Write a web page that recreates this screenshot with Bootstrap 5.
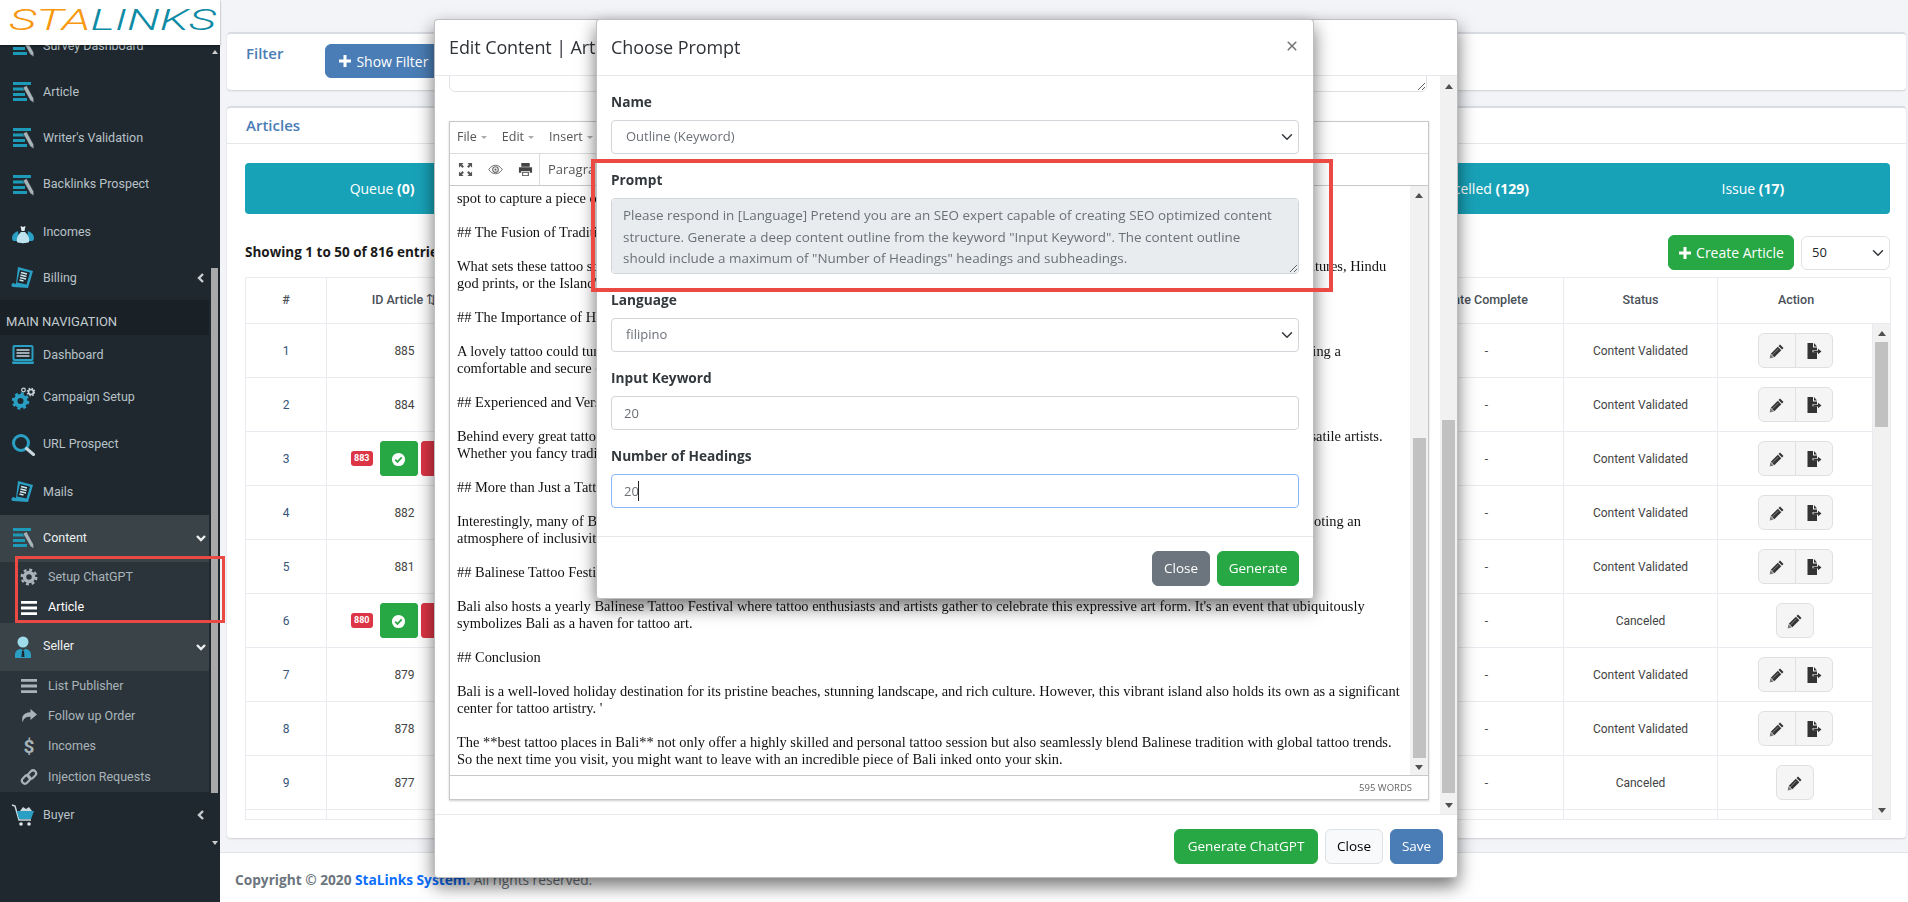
<!DOCTYPE html>
<html lang="en">
<head>
<meta charset="UTF-8">
<title>StaLinks - Articles</title>
<link href="https://cdn.jsdelivr.net/npm/bootstrap@5.3.0/dist/css/bootstrap.min.css" rel="stylesheet">
<style>
    html, body { height: 902px; overflow: hidden; }
    body { font-family: "Open Sans", "Liberation Sans", sans-serif; font-size: 13px; background: #f2f4f8; color: #333; }

    /* sidebar */
    .side-wrap { width: 220px; height: 902px; background: #1f282e; flex-shrink: 0; }
    .logo-box { height: 45px; background: #fff; box-shadow: 0 1px 2px rgba(0,0,0,.4); position: relative; z-index: 2; }
    .side-scroll { height: 803px; overflow: hidden; }
    .side-menu { width: 209px; margin-top: -22px; }
    .side-item { height: 46px; padding-left: 11px; color: #b8c2c8; font-family: Roboto, sans-serif; font-size: 12.5px; text-decoration: none; }
    .side-item .ico { width: 24px; height: 24px; margin-right: 8px; flex-shrink: 0; }
    .side-item .chev { margin-left: auto; margin-right: 3px; width: 10px; height: 10px; }
    .sh-47 { height: 47.5px; } .sh-48 { height: 48px; } .sh-43 { height: 43px; } .sh-41 { height: 41px; }
    .sh-44 { height: 44px; } .sh-50 { height: 50px; } .sh-45 { height: 45px; }
    .side-head { height: 35px; padding: 13px 0 0 6px; background: #192126; color: #c4ccd0; font-family: Roboto, sans-serif; font-size: 13px; line-height: 18px; }
    .side-open { background: #3a4347; color: #eef1f2; }
    .side-sub { background: #2c343b; }
    .sub-item { height: 30.4px; padding-left: 20px; color: #a9b4ba; font-family: Roboto, sans-serif; font-size: 12.5px; text-decoration: none; }
    .sub-item svg { width: 18px; height: 18px; margin-right: 10px; }
    .sub-item .dollar { width: 18px; margin-right: 10px; text-align: center; font-size: 19px; font-weight: 700; line-height: 1; }
    .sub-item.on { color: #fff; }
    .fake-bar { display: flex; flex-direction: column; align-items: center; }
    .bar-up { width: 0; height: 0; border: 4px solid transparent; border-top: 0; border-bottom: 5px solid #505050; }
    .bar-down { width: 0; height: 0; border: 4px solid transparent; border-bottom: 0; border-top: 5px solid #505050; margin-top: auto; }
    .bar-thumb { background: #c1c1c1; }
    .side-bar { width: 7px; margin-left: 2px; height: 803px; }
    .side-bar .bar-up { border-bottom-color: #ccc; border-width: 3px; border-top: 0; border-bottom-width: 4px; margin-top: 5px; }
    .side-bar .bar-down { border-top-color: #ccc; border-width: 3px; border-bottom: 0; border-top-width: 4px; margin-bottom: 3px; }
    .side-bar .bar-thumb { width: 7px; height: 525px; margin-top: 214px; background: #a9a9a9; }

    /* main */
    .main-col { min-width: 0; flex-grow: 1; }
    .main-inner { padding: 32px 2px 0 7px; height: 852px; }
    .box { background: #fff; border-radius: 4px; border-top: 2px solid #d9dce2; box-shadow: 0 1px 2px rgba(0,0,0,.15); }
    .box-filter { height: 58px; padding: 8px 19px; margin-bottom: 16px; }
    .box-title { font-size: 15px; font-weight: 600; color: #4a7db5; }
    .btn-steel { background: #4a7db5; border-color: #4a7db5; color: #fff; font-size: 14px; }
    .btn-steel:hover { background: #4a7db5; color: #fff; }
    .btn-filter { height: 34px; margin-left: 42px; padding: 0 12px; margin-top: 2px; }
    .box-list { height: 732px; }
    .box-list-head { height: 36px; padding: 6px 19px; border-bottom: 1px solid #e4e6ea; }
    .box-list-body { padding: 19px 16px 0 18px; }
    .tab-strip { height: 51px; background: #18a2b8; border-radius: 4px; }
    .tab-cell { color: #fff; font-size: 14px; }
    .list-tools { height: 35px; margin: 21px 0 7px; }
    .show-text { font-size: 13.5px; font-weight: 700; color: #1a1a1a; }
    .btn-create { height: 35px; width: 126px; padding: 0; font-size: 14px; background: #28a745; border-color: #28a745; color: #fff; }
    .sel-len { width: 89px; height: 34px; margin-left: 7px; padding: 0 0 0 10px; font-size: 13px; background-position: right 5px center; background-size: 12px; }
    .art-table { width: 1645px; table-layout: fixed; margin: 0; --bs-border-color: #e9ebf0; font-family: Roboto, sans-serif; font-size: 12px; }
    .art-table th { height: 46px; padding: 0; text-align: center; vertical-align: middle; font-weight: 500; color: #4a5058; font-size: 12.5px; }
    .art-table td { height: 54px; padding: 0; text-align: center; vertical-align: middle; color: #444; }
    .art-table tr.cut td { height: 10px; line-height: 0; }
    .art-table td.num { color: #34557a; }
    .art-table td.bar-cell { background: #f1f1f1; padding: 0; vertical-align: top; }
    .table-bar { height: 495px; }
    .table-bar .bar-up { margin-top: 7px; }
    .table-bar .bar-thumb { width: 13px; height: 85px; margin-top: 6px; }
    .table-bar .bar-down { margin-bottom: 6px; }
    .act-btn { width: 38px; height: 35px; padding: 0; background: #f5f5f5; border: 1px solid #e0e0e0; }
    .act-btn svg { width: 16px; height: 16px; }
    .id-pill { font-size: 9px; font-weight: 700; padding: 1px 3px; background: #dc3545; color: #fff; border-radius: 3px; margin-right: 7px; }
    .go-btn { width: 38px; height: 35px; padding: 0; background: #28a745; border-color: #28a745; border-radius: 3px; }
    .stop-btn { width: 38px; height: 35px; padding: 0; margin-left: 3px; background: #dc3545; border-color: #dc3545; border-radius: 3px; }
    .foot-line { height: 50px; background: #fff; border-top: 1px solid #dfe2e6; padding: 17px 0 0 15px; font-size: 13.7px; color: #6c757d; }
    .foot-line b { font-weight: 700; }
    .foot-line a { color: #0d6efd; font-weight: 700; text-decoration: none; }

    /* modals */
    .dlg { position: fixed; top: 19px; box-shadow: 0 8px 18px rgba(0,0,0,.55); border-radius: 4px; }
    .dlg .modal-content { background: #fff; border: 1px solid rgba(0,0,0,.25); border-radius: 4px; overflow: hidden; }
    .dlg .modal-header { height: 56px; padding: 0 14px; flex: none; border-bottom: 1px solid #e6e8eb; display: flex; align-items: center; justify-content: space-between; }
    .dlg .modal-title { font-size: 18px; font-weight: 400; color: #2f3338; margin: 0; letter-spacing: -.1px; }
    .dlg .modal-footer { flex: none; padding: 0 14px; gap: 7px; justify-content: flex-end; border-top: 1px solid #e6e8eb; display: flex; align-items: center; }
    .dlg .modal-footer > .btn { margin: 0; height: 35px; padding: 0; font-size: 13.5px; }
    .dlg .btn-success { background: #28a745; border-color: #28a745; }
    .dlg .btn-close { width: 12px; height: 12px; padding: 0; margin-right: 1px; margin-top: -4px; background-size: 12px; opacity: .55; }
    .btn-gen { width: 144px; } .btn-cl { width: 58px; } .btn-sv { width: 53px; } .btn-run { width: 82px; }
    .dlg-edit { left: 434px; width: 1024px; height: 859px; z-index: 10; }
    .dlg-edit .modal-footer { height: 64px; }
    .edit-body { flex: none; height: 738px; padding: 0; overflow: hidden; }
    .edit-left { width: 1006px; padding-left: 14px; overflow: hidden; }
    .top-area { width: 978px; height: 40px; margin-top: -24px; margin-bottom: 29px; display: block; }
    .edit-bar { width: 17px; background: #f1f1f1; height: 738px; }
    .edit-bar .bar-up { margin-top: 8px; }
    .edit-bar .bar-thumb { width: 13px; height: 373px; margin-top: 331px; }
    .edit-bar .bar-down { margin-bottom: 6px; }
    .rte { width: 980px; height: 679px; border: 1px solid #c8c8c8; box-shadow: 0 1px 2px rgba(0,0,0,.2); }
    .rte-menu { height: 32px; padding-left: 7px; border-bottom: 1px solid #dcdcdc; gap: 15px; color: #555; font-size: 12.5px; }
    .rte-menu i { display: inline-block; width: 0; height: 0; margin-left: 4px; vertical-align: middle; border: 3px solid transparent; border-bottom: 0; border-top: 3px solid #aaa; }
    .rte-tools { height: 32px; border-bottom: 1px solid #c8c8c8; color: #555; font-size: 13px; }
    .rte-tools .tool-set { width: 90px; height: 31px; padding-left: 8px; gap: 15px; border-right: 1px solid #dcdcdc; }
    .rte-tools svg { width: 15px; height: 15px; }
    .rte-tools span { padding-left: 8px; }
    .rte-main { height: 589px; overflow: hidden; }
    .rte-text { width: 960px; padding: 4px 0 0 7px; font-family: "Liberation Serif", serif; font-size: 14.43px; line-height: 17px; color: #111; white-space: nowrap; overflow: hidden; }
    .rte-text p { margin: 0 0 17px; }
    .rte-bar { width: 18px; background: #f1f1f1; height: 589px; }
    .rte-bar .bar-up { margin-top: 7px; }
    .rte-bar .bar-thumb { width: 13px; height: 320px; margin-top: 240px; }
    .rte-bar .bar-down { margin-bottom: 5px; }
    .rte-status { height: 26px; border-top: 1px solid #c8c8c8; padding-right: 16px; font-size: 9.5px; color: #666; }
    .dlg-prompt { left: 596px; width: 718px; height: 580px; z-index: 20; }
    .dlg-prompt .modal-footer { height: 63px; }
    .prompt-body { flex: none; height: 460px; padding: 17px 14px 0 14px; }
    .field-label { display: block; height: 17px; line-height: 17px; margin-bottom: 10px; font-size: 13.7px; font-weight: 700; color: #33383d; }
    .field-gap { margin-bottom: 17px; }
    .prompt-body .form-control, .prompt-body .form-select { height: 34px; font-size: 13px; color: #6b7077; border-color: #d2d5d9; border-radius: 4px; }
    .prompt-body .form-select { padding-left: 14px; background-position: right 5px center; background-size: 12px; }
    .prompt-body textarea.form-control { height: 76px; padding: 6px 17px 6px 11px; font-size: 13.45px; line-height: 21.5px; background-color: #e9ecef; display: block; }
    .prompt-body .focus-input { border-color: #86b7fe; }
    .caret-mark { position: absolute; left: 27px; top: 7px; width: 1px; height: 20px; background: #222; }
    .note-box { position: fixed; border: 4px solid #ea4a43; z-index: 30; pointer-events: none; }
    .note-prompt { left: 591px; top: 159px; width: 742px; height: 133px; }
    .note-side { left: 15px; top: 556px; width: 210px; height: 67px; border-width: 3px; }
</style>
</head>
<body>

<svg width="0" height="0" class="position-absolute">
    <symbol id="i-doc" viewBox="0 0 24 24">
        <g fill="#1c9ab8"><rect x="2" y="2" width="18" height="3"/><rect x="2" y="7.5" width="12" height="3"/><rect x="2" y="13" width="12" height="3"/><rect x="2" y="18" width="14" height="3"/></g>
        <path d="M12 7.5l3.600-2 7 12.800.4 4.700-3.900-2.800z" fill="#a9b4ba" stroke="#1f282e" stroke-width=".6"/>
    </symbol>
    <symbol id="i-bags" viewBox="0 0 24 24">
        <path d="M1 17c0-3 2-5 4-6l2-1 1 9-2 1H3c-1 0-2-1-2-3zM23 17c0-3-2-5-4-6l-2-1-1 9 2 1h3c1 0 2-1 2-3z" fill="#2a9fc4"/>
        <path d="M6 21c-1-5 2-8 4-10h4c2 2 5 5 4 10-1 1.500-11 1.500-12 0z" fill="#bfe3ee"/>
        <path d="M9.500 5l2.500 1 2.500-1-1 5h-3z" fill="#dfeef3"/>
    </symbol>
    <symbol id="i-scroll" viewBox="0 0 24 24">
        <path d="M7 1l15 4-5 17-15-1c-2 0-2-3 0-4l3 1z" fill="#2a9fc4"/>
        <path d="M9 4l10 2.500-3.500 12-9.500-2z" fill="#1f282e"/>
        <path d="M10 6.500l6 1.500M9.500 9l6 1.500M9 11.500l6 1.500M8.500 14l4 1" stroke="#cfe8f0" stroke-width="1.300"/>
    </symbol>
    <symbol id="i-laptop" viewBox="0 0 24 24">
        <rect x="2.500" y="3" width="19" height="14" rx="1" fill="#1f282e" stroke="#2a9fc4" stroke-width="2"/>
        <path d="M5.500 7h13M5.500 10h13M5.500 13h13" stroke="#c8d8de" stroke-width="1.300"/>
        <path d="M1 18.500h22v1.500l-1 1H2l-1-1z" fill="#2a9fc4"/>
    </symbol>
    <symbol id="i-gears" viewBox="0 0 24 24">
        <circle cx="9.500" cy="15" r="5" fill="none" stroke="#2a9fc4" stroke-width="4"/>
        <circle cx="9.500" cy="15" r="7.500" fill="none" stroke="#2a9fc4" stroke-width="2.500" stroke-dasharray="3 2.900"/>
        <circle cx="20" cy="6" r="2.500" fill="none" stroke="#c8d8de" stroke-width="1.600"/>
        <circle cx="20" cy="6" r="3.800" fill="none" stroke="#c8d8de" stroke-width="1.200" stroke-dasharray="1.500 1.500"/>
        <circle cx="12.500" cy="4" r="1.800" fill="none" stroke="#c8d8de" stroke-width="1.200"/>
    </symbol>
    <symbol id="i-search" viewBox="0 0 24 24">
        <circle cx="10" cy="10" r="7.500" fill="none" stroke="#2a9fc4" stroke-width="3"/>
        <path d="M15.500 15.500l7 6" stroke="#c8d8de" stroke-width="3" stroke-linecap="round"/>
    </symbol>
    <symbol id="i-person" viewBox="0 0 24 24">
        <circle cx="12" cy="7" r="5.500" fill="#9fdcec"/>
        <path d="M4 23v-3c0-4 3-6 6-6l2 2 2-2c3 0 6 2 6 6v3z" fill="#2a9fc4"/>
        <path d="M11 16h2l.5 6h-3z" fill="#1f282e"/>
    </symbol>
    <symbol id="i-cart" viewBox="0 0 24 24">
        <path d="M1 2l3 1 4 14h12" fill="none" stroke="#c8d8de" stroke-width="1.500"/>
        <path d="M6 8h17l-3 8H8z" fill="#2a9fc4"/><path d="M9 8l3-4 3 2 3-2 3 4z" fill="#c8d8de"/>
        <circle cx="10" cy="21" r="1.800" fill="#e0e6e9"/><circle cx="18" cy="21" r="1.800" fill="#e0e6e9"/>
    </symbol>
    <symbol id="i-gear" viewBox="0 0 18 18">
        <circle cx="9" cy="9" r="4.500" fill="none" stroke="currentColor" stroke-width="3.500"/>
        <circle cx="9" cy="9" r="7.300" fill="none" stroke="currentColor" stroke-width="2.400" stroke-dasharray="3 2.730"/>
    </symbol>
    <symbol id="i-bars" viewBox="0 0 18 18"><path d="M1 2h16v2.800H1zM1 7.600h16v2.800H1zM1 13.200h16V16H1z" fill="currentColor"/></symbol>
    <symbol id="i-share" viewBox="0 0 18 18"><path d="M10.500 2L17 7.500 10.500 13V9.800C6 9.800 3.500 11 2.800 15.500 1 10 3 5.500 10.500 5.200z" fill="currentColor"/></symbol>
    <symbol id="i-link" viewBox="0 0 18 18"><g fill="none" stroke="currentColor" stroke-width="2.200"><rect x="1.500" y="8.500" width="9" height="6" rx="3" transform="rotate(-45 6 11.500)"/><rect x="7.500" y="3.500" width="9" height="6" rx="3" transform="rotate(-45 12 6.500)"/></g></symbol>
    <symbol id="i-left" viewBox="0 0 10 10"><path d="M7 1L3 5l4 4" fill="none" stroke="#c8ced2" stroke-width="2.400"/></symbol>
    <symbol id="i-down" viewBox="0 0 10 10"><path d="M1 3l4 4 4-4" fill="none" stroke="#eef1f2" stroke-width="2.400"/></symbol>
    <symbol id="i-plus" viewBox="0 0 14 14"><path d="M5.500 1h3v4.500H13v3H8.500V13h-3V8.500H1v-3h4.500z" fill="#fff"/></symbol>
    <symbol id="i-pencil" viewBox="0 0 16 16">
        <path d="M11 1.500l3.500 3.500-1.500 1.500L9.500 3z" fill="#333"/><path d="M8.800 3.700l3.500 3.500-7 7-3.500-3.500z" fill="#333"/>
        <path d="M1.400 11.300l3.300 3.300-4 .9z" fill="#777"/><path d="M9.300 6l-6 6" stroke="#999" stroke-width=".8"/>
    </symbol>
    <symbol id="i-export" viewBox="0 0 16 16">
        <path d="M1.500 0H7v4.500h4v2.700H6.500v2H11V16H1.500z" fill="#333"/><path d="M8 0l3 3.500H8z" fill="#333"/>
        <path d="M7.500 7.500H12V5.500l3.500 2.800L12 11V9.200H7.500z" fill="#333" transform="translate(0 .3)"/>
    </symbol>
    <symbol id="i-check" viewBox="0 0 16 16"><circle cx="8" cy="8" r="7" fill="#fff"/><path d="M4.500 8.200l2.400 2.400 4.500-4.800" fill="none" stroke="#28a745" stroke-width="1.800"/></symbol>
    <symbol id="i-full" viewBox="0 0 16 16"><path d="M1 1h5L4.300 2.700 6.300 4.700 4.700 6.300 2.700 4.300 1 6zM15 1v5l-1.700-1.700-2 2-1.600-1.600 2-2L10 1zM1 15v-5l1.700 1.700 2-2 1.600 1.600-2 2L6 15zM15 15h-5l1.700-1.700-2-2 1.600-1.600 2 2L15 10z" fill="#555"/></symbol>
    <symbol id="i-eye" viewBox="0 0 16 16"><path d="M.8 8C3 4.800 5.300 3.500 8 3.500S13 4.800 15.200 8C13 11.200 10.700 12.500 8 12.500S3 11.200.8 8z" fill="none" stroke="#666" stroke-width="1"/><circle cx="8" cy="8" r="3" fill="none" stroke="#666" stroke-width="1.200"/><circle cx="8" cy="8" r="1.200" fill="#666"/></symbol>
    <symbol id="i-print" viewBox="0 0 16 16"><path d="M3.500 1h9v4h-9zM1 5.500h14v6h-2.500V9.500h-9v2H1z" fill="#444"/><path d="M4.500 10.500h7V15h-7z" fill="#444"/><path d="M5.500 11.500h5V14h-5z" fill="#fff"/></symbol>
</svg>

<div class="d-flex">
    <div class="side-wrap">
        <div class="logo-box d-flex align-items-center">
            <svg width="220" height="45">
                <text x="9" y="30" font-family="Roboto, sans-serif" font-style="italic" font-weight="300" font-size="29" textLength="207" lengthAdjust="spacingAndGlyphs"><tspan fill="#f7980f">STA</tspan><tspan fill="#0f8ba5">LINKS</tspan></text>
            </svg>
        </div>
        <div class="side-scroll d-flex">
            <div class="side-menu">
                <a class="side-item d-flex align-items-center"><svg class="ico"><use href="#i-doc"/></svg>Survey Dashboard</a>
                <a class="side-item d-flex align-items-center"><svg class="ico"><use href="#i-doc"/></svg>Article</a>
                <a class="side-item d-flex align-items-center"><svg class="ico"><use href="#i-doc"/></svg>Writer's Validation</a>
                <a class="side-item sh-47 d-flex align-items-center"><svg class="ico"><use href="#i-doc"/></svg>Backlinks Prospect</a>
                <a class="side-item sh-48 d-flex align-items-center"><svg class="ico"><use href="#i-bags"/></svg>Incomes</a>
                <a class="side-item sh-43 d-flex align-items-center"><svg class="ico"><use href="#i-scroll"/></svg>Billing<svg class="chev"><use href="#i-left"/></svg></a>
                <div class="side-head">MAIN NAVIGATION</div>
                <a class="side-item sh-41 d-flex align-items-center"><svg class="ico"><use href="#i-laptop"/></svg>Dashboard</a>
                <a class="side-item sh-44 d-flex align-items-center"><svg class="ico"><use href="#i-gears"/></svg>Campaign Setup</a>
                <a class="side-item sh-50 d-flex align-items-center"><svg class="ico"><use href="#i-search"/></svg>URL Prospect</a>
                <a class="side-item sh-45 d-flex align-items-center"><svg class="ico"><use href="#i-scroll"/></svg>Mails</a>
                <a class="side-item sh-47 side-open d-flex align-items-center"><svg class="ico"><use href="#i-doc"/></svg>Content<svg class="chev"><use href="#i-down"/></svg></a>
                <div class="side-sub">
                    <a class="sub-item d-flex align-items-center"><svg><use href="#i-gear"/></svg>Setup ChatGPT</a>
                    <a class="sub-item on d-flex align-items-center"><svg><use href="#i-bars"/></svg>Article</a>
                </div>
                <a class="side-item sh-48 side-open d-flex align-items-center"><svg class="ico"><use href="#i-person"/></svg>Seller<svg class="chev"><use href="#i-down"/></svg></a>
                <div class="side-sub">
                    <a class="sub-item d-flex align-items-center"><svg><use href="#i-bars"/></svg>List Publisher</a>
                    <a class="sub-item d-flex align-items-center"><svg><use href="#i-share"/></svg>Follow up Order</a>
                    <a class="sub-item d-flex align-items-center"><span class="dollar">$</span>Incomes</a>
                    <a class="sub-item d-flex align-items-center"><svg><use href="#i-link"/></svg>Injection Requests</a>
                </div>
                <a class="side-item d-flex align-items-center"><svg class="ico"><use href="#i-cart"/></svg>Buyer<svg class="chev"><use href="#i-left"/></svg></a>
                <a class="side-item d-flex align-items-center"><svg class="ico"><use href="#i-doc"/></svg>Tools</a>
            </div>
            <div class="side-bar fake-bar"><div class="bar-up"></div><div class="bar-thumb"></div><div class="bar-down"></div></div>
        </div>
    </div>

    <div class="main-col">
        <div class="main-inner">
            <div class="box box-filter d-flex align-items-start">
                <div class="box-title">Filter</div>
                <button class="btn btn-steel btn-filter d-flex align-items-center gap-1"><svg width="14" height="14"><use href="#i-plus"/></svg>Show Filter</button>
            </div>
            <div class="box box-list">
                <div class="box-list-head box-title">Articles</div>
                <div class="box-list-body">
                    <div class="tab-strip d-flex">
                        <div class="tab-cell flex-fill d-flex align-items-center justify-content-center w-100"><span>Queue <b>(0)</b></span></div>
                        <div class="tab-cell flex-fill d-flex align-items-center justify-content-center w-100"><span>Writing <b>(4)</b></span></div>
                        <div class="tab-cell flex-fill d-flex align-items-center justify-content-center w-100"><span>Review <b>(2)</b></span></div>
                        <div class="tab-cell flex-fill d-flex align-items-center justify-content-center w-100"><span>Validated <b>(664)</b></span></div>
                        <div class="tab-cell flex-fill d-flex align-items-center justify-content-center w-100"><span>Cancelled <b>(129)</b></span></div>
                        <div class="tab-cell flex-fill d-flex align-items-center justify-content-center w-100"><span>Issue <b>(17)</b></span></div>
                    </div>
                    <div class="list-tools d-flex align-items-center justify-content-between">
                        <div class="show-text">Showing 1 to 50 of 816 entries</div>
                        <div class="d-flex align-items-center">
                            <button class="btn btn-create d-flex align-items-center justify-content-center gap-1"><svg width="14" height="14"><use href="#i-plus"/></svg>Create Article</button>
                            <select class="form-select sel-len"><option>50</option></select>
                        </div>
                    </div>
                    <table class="table table-bordered art-table">
                        <colgroup><col width="81"><col width="156"><col width="309"><col width="309"><col width="309"><col width="154"><col width="154"><col width="155"><col width="18"></colgroup>
                        <thead><tr><th>#</th><th>ID Article ⇅</th><th>Keyword</th><th>Writer</th><th>Date Request</th><th>Date Complete</th><th>Status</th><th colspan="2" class="pe-3">Action</th></tr></thead>
                        <tbody id="rows"></tbody>
                    </table>
                </div>
            </div>
        </div>
        <div class="foot-line"><b>Copyright © 2020 <a href="#">StaLinks System.</a></b> All rights reserved.</div>
    </div>
</div>

<div class="dlg dlg-edit">
    <div class="modal-content h-100">
        <div class="modal-header"><h5 class="modal-title">Edit Content | Article</h5></div>
        <div class="modal-body edit-body d-flex">
            <div class="edit-left">
                <textarea class="form-control top-area"></textarea>
                <div class="rte">
                    <div class="rte-menu d-flex align-items-center"><span>File<i></i></span><span>Edit<i></i></span><span>Insert<i></i></span></div>
                    <div class="rte-tools d-flex align-items-center">
                        <div class="tool-set d-flex align-items-center">
                            <svg><use href="#i-full"/></svg><svg><use href="#i-eye"/></svg><svg><use href="#i-print"/></svg>
                        </div>
                        <span>Paragraph</span>
                    </div>
                    <div class="rte-main d-flex">
                        <div class="rte-text">
                            <p>spot to capture a piece of paradise on their skin.</p>
                            <p>## The Fusion of Traditional and Modern Art</p>
                            <p>What sets these tattoo studios apart is their fusion of traditional Balinese art and modern tattoo techniques, blending old motifs such as mythical creatures, Hindu<br>god prints, or the Island's sacred symbols into stunning body art.</p>
                            <p>## The Importance of Hygiene and Comfort</p>
                            <p>A lovely tattoo could turn into a nightmare without proper hygiene, which is why Bali's studios follow strict sterilisation standards while also providing a<br>comfortable and secure environment for every client.</p>
                            <p>## Experienced and Versatile Artists</p>
                            <p>Behind every great tattoo is a great artist, and the tattoo studios across Bali are proud to count among all their teams some truly experienced and versatile artists.<br>Whether you fancy traditional patterns or a modern design, there is someone for you.</p>
                            <p>## More than Just a Tattoo</p>
                            <p>Interestingly, many of Bali's tattoo shops also serve as gathering places for local artists and all travellers from every single corner of the world, promoting an<br>atmosphere of inclusivity and creative exchange.</p>
                            <p>## Balinese Tattoo Festival</p>
                            <p>Bali also hosts a yearly Balinese Tattoo Festival where tattoo enthusiasts and artists gather to celebrate this expressive art form. It's an event that ubiquitously<br>symbolizes Bali as a haven for tattoo art.</p>
                            <p>## Conclusion</p>
                            <p>Bali is a well-loved holiday destination for its pristine beaches, stunning landscape, and rich culture. However, this vibrant island also holds its own as a significant<br>center for tattoo artistry. '</p>
                            <p>The **best tattoo places in Bali** not only offer a highly skilled and personal tattoo session but also seamlessly blend Balinese tradition with global tattoo trends.<br>So the next time you visit, you might want to leave with an incredible piece of Bali inked onto your skin.</p>
                        </div>
                        <div class="rte-bar fake-bar ms-auto"><div class="bar-up"></div><div class="bar-thumb"></div><div class="bar-down"></div></div>
                    </div>
                    <div class="rte-status d-flex align-items-center justify-content-end">595 WORDS</div>
                </div>
            </div>
            <div class="edit-bar fake-bar"><div class="bar-up"></div><div class="bar-thumb"></div><div class="bar-down"></div></div>
        </div>
        <div class="modal-footer">
            <button class="btn btn-success btn-gen">Generate ChatGPT</button>
            <button class="btn btn-light border btn-cl">Close</button>
            <button class="btn btn-steel btn-sv">Save</button>
        </div>
    </div>
</div>

<div class="dlg dlg-prompt">
    <div class="modal-content h-100">
        <div class="modal-header">
            <h5 class="modal-title">Choose Prompt</h5>
            <button type="button" class="btn-close" aria-label="Close"></button>
        </div>
        <div class="modal-body prompt-body">
            <label class="field-label">Name</label>
            <select class="form-select field-gap"><option>Outline (Keyword)</option></select>
            <label class="field-label">Prompt</label>
            <textarea class="form-control field-gap" disabled>Please respond in [Language] Pretend you are an SEO expert capable of creating SEO optimized content structure. Generate a deep content outline from the keyword "Input Keyword". The content outline should include a maximum of "Number of Headings" headings and subheadings.</textarea>
            <label class="field-label">Language</label>
            <select class="form-select field-gap"><option>filipino</option></select>
            <label class="field-label">Input Keyword</label>
            <input class="form-control field-gap" value="20">
            <label class="field-label">Number of Headings</label>
            <div class="position-relative">
                <input class="form-control focus-input" value="20">
                <div class="caret-mark"></div>
            </div>
        </div>
        <div class="modal-footer">
            <button class="btn btn-secondary btn-cl">Close</button>
            <button class="btn btn-success btn-run">Generate</button>
        </div>
    </div>
</div>

<div class="note-box note-prompt"></div>
<div class="note-box note-side"></div>

<script src="https://cdn.jsdelivr.net/npm/bootstrap@5.3.0/dist/js/bootstrap.bundle.min.js"></script>
<script>
    let articles = [
        { id: 885, status: "Content Validated" },
        { id: 884, status: "Content Validated" },
        { id: 883, status: "Content Validated", flag: true },
        { id: 882, status: "Content Validated" },
        { id: 881, status: "Content Validated" },
        { id: 880, status: "Canceled", flag: true },
        { id: 879, status: "Content Validated" },
        { id: 878, status: "Content Validated" },
        { id: 877, status: "Canceled" }
    ];
    let html = "";
    articles.forEach((a, i) => {
        let idCell = a.flag
            ? `<div class="d-flex align-items-center ps-4"><span class="id-pill">${a.id}</span><button class="btn go-btn"><svg width="15" height="15"><use href="#i-check"/></svg></button><button class="btn stop-btn"></button></div>`
            : a.id;
        let actions = `<button class="btn act-btn"><svg><use href="#i-pencil"/></svg></button>`;
        if (a.status !== "Canceled") actions += `<button class="btn act-btn"><svg><use href="#i-export"/></svg></button>`;
        html += `<tr><td class="num">${i + 1}</td><td>${idCell}</td><td></td><td></td><td></td><td>-</td><td>${a.status}</td><td><div class="btn-group">${actions}</div></td>`;
        if (i === 0) html += `<td class="bar-cell" rowspan="10"><div class="table-bar fake-bar"><div class="bar-up"></div><div class="bar-thumb"></div><div class="bar-down"></div></div></td>`;
        html += `</tr>`;
    });
    html += `<tr class="cut"><td></td><td></td><td></td><td></td><td></td><td></td><td></td><td></td></tr>`;
    document.getElementById("rows").innerHTML = html;
</script>
</body>
</html>
